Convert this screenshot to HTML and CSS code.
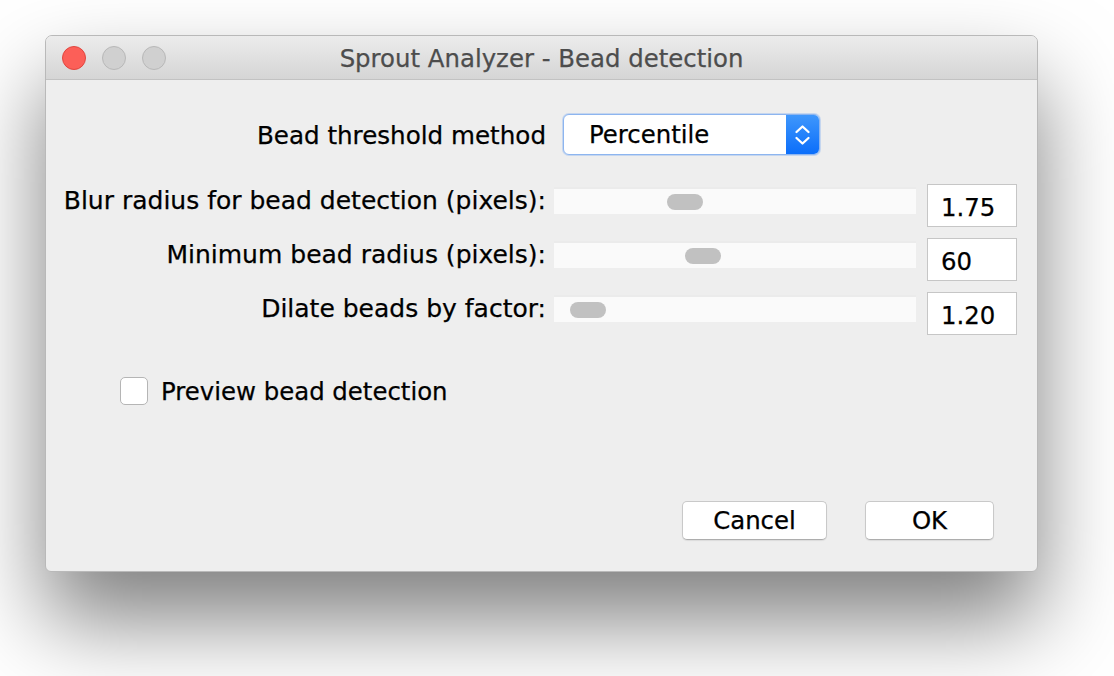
FILE: index.html
```html
<!DOCTYPE html>
<html lang="en">
<head>
<meta charset="utf-8">
<title>Sprout Analyzer - Bead detection</title>
<link rel="stylesheet" href="styles.css">
</head>
<body>
<div class="window">
  <div class="titlebar">
    <div class="lights">
      <span class="light light-close"></span>
      <span class="light light-off"></span>
      <span class="light light-off"></span>
    </div>
    <div class="title">Sprout Analyzer - Bead detection</div>
  </div>
  <div class="content">
    <div class="select-row">
      <div class="select-label">Bead threshold method</div>
      <div class="select">
        <span class="select-value">Percentile</span>
        <span class="select-arrows">
          <svg width="33" height="39" viewBox="0 0 33 39" aria-hidden="true">
            <path d="M10.5 17 L16.5 11.5 L22.5 17" fill="none" stroke="#fff" stroke-width="2.3" stroke-linecap="round" stroke-linejoin="round"/>
            <path d="M10.5 23 L16.5 28.5 L22.5 23" fill="none" stroke="#fff" stroke-width="2.3" stroke-linecap="round" stroke-linejoin="round"/>
          </svg>
        </span>
      </div>
    </div>
    <div class="sliders">
      <div class="s-label">Blur radius for bead detection (pixels):</div>
      <div class="track"><span class="thumb" style="left:113px"></span></div>
      <div class="field">1.75</div>

      <div class="s-label">Minimum bead radius (pixels):</div>
      <div class="track"><span class="thumb" style="left:131px"></span></div>
      <div class="field">60</div>

      <div class="s-label">Dilate beads by factor:</div>
      <div class="track"><span class="thumb" style="left:16px"></span></div>
      <div class="field">1.20</div>
    </div>
    <label class="check-row">
      <span class="checkbox"></span>
      <span class="check-text">Preview bead detection</span>
    </label>
    <div class="footer">
      <button class="btn btn-cancel">Cancel</button>
      <button class="btn btn-ok">OK</button>
    </div>
  </div>
</div>
</body>
</html>
```

FILE: styles.css
```css
html, body {
  margin: 0;
  padding: 0;
  background: #ffffff;
  width: 1114px;
  height: 676px;
  overflow: hidden;
}

body {
  font-family: "DejaVu Sans", "Liberation Sans", sans-serif;
  font-size: 24.4px;
  color: #000;
  padding: 35px 0 0 45px;
  box-sizing: border-box;
  -webkit-text-stroke: 0.25px currentColor;
}

.window {
  width: 993px;
  height: 537px;
  box-sizing: border-box;
  border: 1px solid #b9b9b9;
  border-radius: 7px 7px 6px 6px;
  background: #eeeeee;
  box-shadow: 0 48px 88px rgba(0, 0, 0, 0.5);
  display: flex;
  flex-direction: column;
  overflow: hidden;
}

.titlebar {
  height: 43px;
  flex: none;
  border-bottom: 1px solid #c2c2c2;
  background: linear-gradient(#ececec, #d5d5d5);
  display: flex;
  align-items: center;
  position: relative;
}

.lights {
  display: flex;
  gap: 16px;
  padding-left: 16px;
  position: relative;
  z-index: 1;
}

.light {
  width: 24px;
  height: 24px;
  box-sizing: border-box;
  border-radius: 50%;
}

.light-close {
  background: #fc5f58;
  border: 1px solid #e0463f;
}

.light-off {
  background: #d0d0d0;
  border: 1px solid #b8b8b8;
}

.title {
  position: absolute;
  left: 0;
  right: 0;
  top: 0;
  bottom: 0;
  display: flex;
  align-items: center;
  justify-content: center;
  color: #4d4d4d;
  line-height: 1;
  padding-top: 4px;
  box-sizing: border-box;
}

.content {
  flex: 1;
  display: flex;
  flex-direction: column;
  padding-top: 34px;
}

.select-row {
  display: flex;
  align-items: center;
}

.select-label {
  width: 500px;
  text-align: right;
  margin-right: 17px;
  font-size: 24.6px;
  padding-top: 2px;
}

.select {
  width: 257px;
  height: 41px;
  box-sizing: border-box;
  border: 1px solid #8db5ef;
  border-radius: 6px;
  background: #ffffff;
  box-shadow: 0 0 0 1px rgba(120, 170, 240, 0.35);
  display: flex;
  align-items: stretch;
  overflow: hidden;
}

.select-value {
  flex: 1;
  padding-left: 25px;
  display: flex;
  align-items: center;
}

.select-arrows {
  width: 33px;
  background: linear-gradient(#3f97fc, #0b6efa);
  display: flex;
  align-items: center;
  justify-content: center;
}

.sliders {
  margin-top: 29px;
  display: grid;
  grid-template-columns: 500px 362px 93px;
  grid-auto-rows: 43px;
  column-gap: 8px;
  row-gap: 11px;
}

.s-label {
  text-align: right;
  line-height: 27px;
  margin-top: 3px;
  white-space: nowrap;
  font-size: 25px;
}

.track {
  margin-top: 3px;
  height: 27px;
  box-sizing: border-box;
  background: #fafafa;
  border-top: 2px solid #ebebeb;
  position: relative;
}

.thumb {
  position: absolute;
  top: 5px;
  width: 36px;
  height: 16px;
  border-radius: 8px;
  background: #c1c1c1;
}

.field {
  margin-left: 3px;
  height: 43px;
  box-sizing: border-box;
  border: 1px solid #c6c6c6;
  background: #ffffff;
  padding-left: 13px;
  padding-top: 3px;
  display: flex;
  align-items: center;
}

.check-row {
  margin-top: 41px;
  margin-left: 74px;
  display: flex;
  align-items: center;
  gap: 13px;
}

.checkbox {
  width: 28px;
  height: 28px;
  box-sizing: border-box;
  border: 1px solid #b5b5b5;
  border-radius: 5px;
  background: #ffffff;
}

.check-text {
  line-height: 28px;
  padding-top: 2px;
}

.footer {
  margin-top: auto;
  display: flex;
  justify-content: flex-end;
  gap: 38px;
  padding: 0 43px 31px 0;
}

.btn {
  font-family: inherit;
  font-size: 24.4px;
  color: #000;
  height: 39px;
  box-sizing: border-box;
  background: #ffffff;
  border: 1px solid #c9c9c9;
  border-bottom-color: #adadad;
  border-radius: 5px;
  box-shadow: 0 1px 1px rgba(0, 0, 0, 0.08);
  padding: 1px 0 0;
  line-height: 1;
  -webkit-text-stroke: 0.25px currentColor;
}

.btn-cancel {
  width: 145px;
}

.btn-ok {
  width: 129px;
}
```
